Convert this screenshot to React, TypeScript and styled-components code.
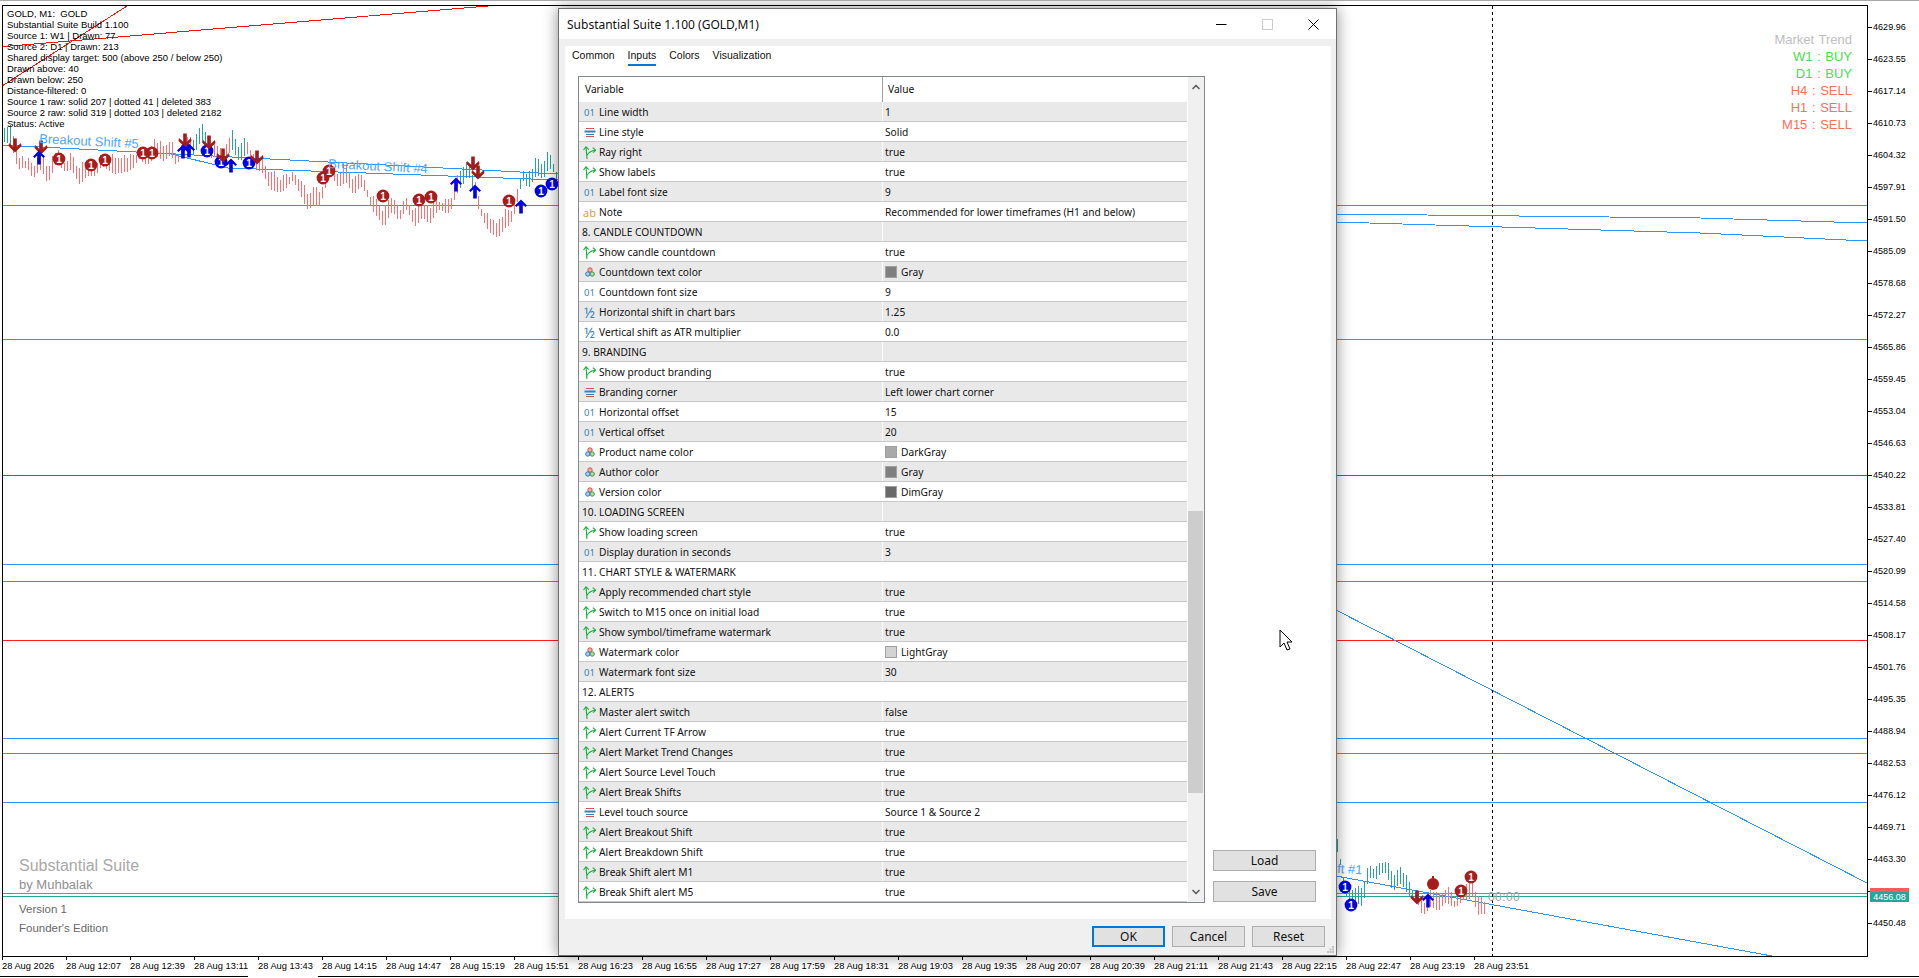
import React from "react";
import styled, { createGlobalStyle } from "styled-components";
import { ChevronUp, ChevronDown } from "lucide-react";

const GlobalStyle = createGlobalStyle`
  html, body {
    margin: 0;
    padding: 0;
    background: #ffffff;
    overflow: hidden;
  }
`;

const chartFont = `"Liberation Sans", Arial, sans-serif`;
const uiFont = `"Noto Sans", "Liberation Sans", sans-serif`;

const Page = styled.div`
  position: relative;
  width: 1919px;
  height: 978px;
  overflow: hidden;
  background: #fff;
  border-top: 1px solid #a8a8a8;
  box-sizing: border-box;
  padding-top: 4px;
  font-family: ${chartFont};
  color: #000;
`;

const ChartRow = styled.div`
  display: flex;
  height: 952px;
  padding-left: 2px;
`;

const ChartPane = styled.div`
  position: relative;
  width: 1866px;
  border: 1px solid #000;
  box-sizing: border-box;
  overflow: hidden;
`;

const ChartSvg = styled.svg`
  position: absolute;
  left: 0;
  top: 0;
  width: 1864px;
  height: 950px;
`;

const PriceAxis = styled.div`
  display: flex;
  flex-direction: column;
  padding-top: 6px;
`;

const PriceLabel = styled.div`
  position: relative;
  height: 32px;
  line-height: 32px;
  padding-left: 5px;
  font-size: 9px;
  letter-spacing: 0.05px;
  color: #000;

  &::before {
    content: "";
    position: absolute;
    left: 0;
    top: 16px;
    width: 4px;
    height: 1px;
    background: #000;
  }
`;

const PriceTag = styled.div<{ $bg: string }>`
  position: absolute;
  left: 1870px;
  width: 39px;
  height: 10px;
  line-height: 10px;
  background: ${(p) => p.$bg};
  color: #fff;
  font-size: 9px;
  text-align: center;
`;

const TimeAxis = styled.div`
  display: flex;
  height: 19px;
  padding-left: 2px;
`;

const TimeLabel = styled.div`
  position: relative;
  flex: 0 0 64px;
  padding-top: 4px;
  font-size: 9.3px;
  line-height: 11px;
  white-space: nowrap;

  &::before {
    content: "";
    position: absolute;
    left: 0;
    top: 0;
    width: 1px;
    height: 3px;
    background: #000;
  }
`;

const BottomRule = styled.div`
  display: flex;
  height: 1px;
`;

const RuleSegment = styled.div<{ $w: string; $on?: boolean }>`
  width: ${(p) => p.$w};
  background: ${(p) => (p.$on ? "#000" : "transparent")};
`;

const InfoBlock = styled.div`
  position: absolute;
  left: 4px;
  top: 2px;
  font-size: 9.5px;
  line-height: 11px;
  white-space: pre;
  color: #000;
`;

const TrendBlock = styled.div`
  position: absolute;
  right: 15px;
  top: 25px;
  text-align: right;
  font-size: 13px;
  line-height: 17px;
`;

const TrendLine = styled.div<{ $color: string }>`
  color: ${(p) => p.$color};
  word-spacing: 1px;
`;

const Branding = styled.div`
  position: absolute;
  left: 16px;
  bottom: 18px;
  display: flex;
  flex-direction: column;
`;

const BrandName = styled.div`
  font-size: 16px;
  line-height: 19px;
  color: #a9a9a9;
`;

const BrandAuthor = styled.div`
  font-size: 13px;
  line-height: 19px;
  color: #909090;
  margin-bottom: 6px;
`;

const BrandMeta = styled.div`
  font-size: 11.5px;
  line-height: 19px;
  color: #696969;
`;

const Dialog = styled.div`
  position: absolute;
  left: 558px;
  top: 7px;
  width: 779px;
  height: 948px;
  box-sizing: border-box;
  border: 1px solid #6f6f6f;
  background: #f0f0f0;
  box-shadow: 0 0 14px rgba(0, 0, 0, 0.45);
  display: flex;
  flex-direction: column;
  font-family: ${uiFont};
  color: #111;
`;

const TitleBar = styled.div`
  flex: 0 0 30px;
  display: flex;
  align-items: center;
  background: #fff;
  padding-left: 8px;
  font-size: 12px;
`;

const TitleText = styled.div`
  flex: 1;
`;

const WindowButton = styled.div`
  width: 46px;
  height: 30px;
  display: flex;
  align-items: center;
  justify-content: center;
`;

const Panel = styled.div`
  margin: 7px 5px 0 6px;
  height: 873px;
  background: #fff;
  padding-left: 13px;
  display: flex;
  flex-direction: column;
`;

const TabBar = styled.div`
  display: flex;
  gap: 13px;
  height: 20px;
  margin-left: -6px;
  font-family: ${chartFont};
  font-size: 10.5px;
`;

const Tab = styled.div<{ $active?: boolean }>`
  height: 20px;
  line-height: 18px;
  box-sizing: border-box;
  border-bottom: 2px solid ${(p) => (p.$active ? "#0078d7" : "transparent")};
`;

const Body = styled.div`
  display: flex;
  gap: 8px;
  margin-top: 10px;
  height: 827px;
`;

const Table = styled.div`
  width: 627px;
  box-sizing: border-box;
  border: 1px solid #828790;
  display: flex;
  background: #fff;
`;

const Grid = styled.div`
  flex: 1;
  display: flex;
  flex-direction: column;
  min-width: 0;
`;

const HeaderRow = styled.div`
  display: flex;
  height: 25px;
  font-size: 10.2px;
  line-height: 25px;
`;

const HeaderCell = styled.div<{ $value?: boolean }>`
  box-sizing: border-box;
  width: ${(p) => (p.$value ? "auto" : "303px")};
  flex: ${(p) => (p.$value ? 1 : "none")};
  padding-left: ${(p) => (p.$value ? "5px" : "6px")};
  border-left: ${(p) => (p.$value ? "1px solid #a0a0a0" : "none")};
`;

const Row = styled.div<{ $alt: boolean }>`
  display: flex;
  height: 20px;
  box-sizing: border-box;
  border-bottom: 1px solid #c8c8c8;
  background: ${(p) => (p.$alt ? "#e9e9e9" : "#fff")};
  font-size: 10.2px;
  line-height: 19px;
`;

const VariableCell = styled.div<{ $section: boolean }>`
  width: 303px;
  box-sizing: border-box;
  padding: 1px 0 0 ${(p) => (p.$section ? "3px" : "4px")};
  display: flex;
  align-items: center;
  gap: 3px;
  white-space: nowrap;
`;

const ValueCell = styled.div`
  flex: 1;
  box-sizing: border-box;
  border-left: 1px solid #fff;
  padding: 1px 0 0 2px;
  display: flex;
  align-items: center;
  gap: 4px;
  white-space: nowrap;
`;

const IconBox = styled.span<{ $color?: string; $size?: string }>`
  width: 13px;
  height: 13px;
  flex: none;
  display: flex;
  align-items: center;
  justify-content: center;
  font-size: ${(p) => p.$size ?? "9.5px"};
  line-height: 13px;
  color: ${(p) => p.$color ?? "#000"};
`;

const Swatch = styled.span<{ $color: string }>`
  width: 12px;
  height: 12px;
  flex: none;
  background: ${(p) => p.$color};
  border: 1px solid #a0a0a0;
  box-sizing: border-box;
`;

const Scrollbar = styled.div`
  flex: 0 0 16px;
  margin-left: 1px;
  background: #f0f0f0;
  display: flex;
  flex-direction: column;
`;

const ScrollArrow = styled.div`
  height: 20px;
  flex: none;
  display: flex;
  align-items: center;
  justify-content: center;
  color: #606060;
`;

const ScrollTrack = styled.div`
  flex: 1;
`;

const ScrollThumb = styled.div`
  margin-top: 414px;
  height: 282px;
  margin-right: 1px;
  background: #cdcdcd;
`;

const SideColumn = styled.div`
  width: 103px;
  display: flex;
  flex-direction: column;
  justify-content: flex-end;
  gap: 10px;
  padding-bottom: 1px;
`;

const Footer = styled.div`
  display: flex;
  justify-content: flex-end;
  gap: 7px;
  padding: 7px 11px 0 0;
`;

const Button = styled.div<{ $primary?: boolean; $w: string }>`
  width: ${(p) => p.$w};
  height: 21px;
  box-sizing: border-box;
  display: flex;
  align-items: center;
  justify-content: center;
  background: #e1e1e1;
  border: ${(p) => (p.$primary ? "2px solid #0078d7" : "1px solid #adadad")};
  font-size: 12px;
`;

const Grip = styled.svg`
  position: absolute;
  right: 1px;
  bottom: 1px;
`;

const Cursor = styled.svg`
  position: absolute;
  left: 1279px;
  top: 628px;
`;

const infoLines = [
  "GOLD, M1:  GOLD",
  "Substantial Suite Build 1.100",
  "Source 1: W1 | Drawn: 77",
  "Source 2: D1 | Drawn: 213",
  "Shared display target: 500 (above 250 / below 250)",
  "Drawn above: 40",
  "Drawn below: 250",
  "Distance-filtered: 0",
  "Source 1 raw: solid 207 | dotted 41 | deleted 383",
  "Source 2 raw: solid 319 | dotted 103 | deleted 2182",
  "Status: Active",
];

const trend = [
  { text: "Market Trend", color: "#c0c0c0" },
  { text: "W1 : BUY", color: "#4cdc4c" },
  { text: "D1 : BUY", color: "#4cdc4c" },
  { text: "H4 : SELL", color: "#ff6d5c" },
  { text: "H1 : SELL", color: "#ff6d5c" },
  { text: "M15 : SELL", color: "#ff6d5c" },
];

// the 4456.89 label sits under the current price tag in the terminal
const prices = [
  "4629.96", "4623.55", "4617.14", "4610.73", "4604.32", "4597.91", "4591.50", "4585.09",
  "4578.68", "4572.27", "4565.86", "4559.45", "4553.04", "4546.63", "4540.22", "4533.81",
  "4527.40", "4520.99", "4514.58", "4508.17", "4501.76", "4495.35", "4488.94", "4482.53",
  "4476.12", "4469.71", "4463.30", "", "4450.48",
];

const times = [
  "28 Aug 2026", "28 Aug 12:07", "28 Aug 12:39", "28 Aug 13:11", "28 Aug 13:43", "28 Aug 14:15",
  "28 Aug 14:47", "28 Aug 15:19", "28 Aug 15:51", "28 Aug 16:23", "28 Aug 16:55", "28 Aug 17:27",
  "28 Aug 17:59", "28 Aug 18:31", "28 Aug 19:03", "28 Aug 19:35", "28 Aug 20:07", "28 Aug 20:39",
  "28 Aug 21:11", "28 Aug 21:43", "28 Aug 22:15", "28 Aug 22:47", "28 Aug 23:19", "28 Aug 23:51",
];

type Kind = "int" | "enum" | "bool" | "text" | "color" | "frac" | "section";
type Setting = { kind: Kind; name: string; value?: string; swatch?: string };

const settings: Setting[] = [
  { kind: "int", name: "Line width", value: "1" },
  { kind: "enum", name: "Line style", value: "Solid" },
  { kind: "bool", name: "Ray right", value: "true" },
  { kind: "bool", name: "Show labels", value: "true" },
  { kind: "int", name: "Label font size", value: "9" },
  { kind: "text", name: "Note", value: "Recommended for lower timeframes (H1 and below)" },
  { kind: "section", name: "8. CANDLE COUNTDOWN" },
  { kind: "bool", name: "Show candle countdown", value: "true" },
  { kind: "color", name: "Countdown text color", value: "Gray", swatch: "#808080" },
  { kind: "int", name: "Countdown font size", value: "9" },
  { kind: "frac", name: "Horizontal shift in chart bars", value: "1.25" },
  { kind: "frac", name: "Vertical shift as ATR multiplier", value: "0.0" },
  { kind: "section", name: "9. BRANDING" },
  { kind: "bool", name: "Show product branding", value: "true" },
  { kind: "enum", name: "Branding corner", value: "Left lower chart corner" },
  { kind: "int", name: "Horizontal offset", value: "15" },
  { kind: "int", name: "Vertical offset", value: "20" },
  { kind: "color", name: "Product name color", value: "DarkGray", swatch: "#a9a9a9" },
  { kind: "color", name: "Author color", value: "Gray", swatch: "#808080" },
  { kind: "color", name: "Version color", value: "DimGray", swatch: "#696969" },
  { kind: "section", name: "10. LOADING SCREEN" },
  { kind: "bool", name: "Show loading screen", value: "true" },
  { kind: "int", name: "Display duration in seconds", value: "3" },
  { kind: "section", name: "11. CHART STYLE & WATERMARK" },
  { kind: "bool", name: "Apply recommended chart style", value: "true" },
  { kind: "bool", name: "Switch to M15 once on initial load", value: "true" },
  { kind: "bool", name: "Show symbol/timeframe watermark", value: "true" },
  { kind: "color", name: "Watermark color", value: "LightGray", swatch: "#d3d3d3" },
  { kind: "int", name: "Watermark font size", value: "30" },
  { kind: "section", name: "12. ALERTS" },
  { kind: "bool", name: "Master alert switch", value: "false" },
  { kind: "bool", name: "Alert Current TF Arrow", value: "true" },
  { kind: "bool", name: "Alert Market Trend Changes", value: "true" },
  { kind: "bool", name: "Alert Source Level Touch", value: "true" },
  { kind: "bool", name: "Alert Break Shifts", value: "true" },
  { kind: "enum", name: "Level touch source", value: "Source 1 & Source 2" },
  { kind: "bool", name: "Alert Breakout Shift", value: "true" },
  { kind: "bool", name: "Alert Breakdown Shift", value: "true" },
  { kind: "bool", name: "Break Shift alert M1", value: "true" },
  { kind: "bool", name: "Break Shift alert M5", value: "true" },
];

const SettingIcon = ({ kind }: { kind: Kind }) => {
  if (kind === "int") return <IconBox $color="#3d7fb8">01</IconBox>;
  if (kind === "text") return <IconBox $color="#d9a03f" $size="11px">ab</IconBox>;
  if (kind === "frac") return <IconBox $color="#3d7fb8" $size="14px">½</IconBox>;
  if (kind === "enum") {
    return (
      <IconBox>
        <svg width="12" height="11" viewBox="0 0 12 11">
          <path d="M2 1.5h8" stroke="#e05050" />
          <path d="M0.5 4.5h11" stroke="#2f80d0" strokeWidth="2" />
          <path d="M2 7.5h8" stroke="#2f80d0" />
          <path d="M2 9.5h8" stroke="#e05050" />
        </svg>
      </IconBox>
    );
  }
  if (kind === "bool") {
    return (
      <IconBox>
        <svg width="13" height="13" viewBox="0 0 13 13" fill="none" stroke="#17b03a" strokeWidth="1.1">
          <path d="M4 13L3 1" />
          <path d="M0.5 4L3 0.8L5.8 3.6" />
          <path d="M4 9.2C5.5 6.5 8 4.6 12.6 4.2" />
          <path d="M9.8 1.6L12.7 4.2L10 6.6" />
        </svg>
      </IconBox>
    );
  }
  if (kind === "color") {
    return (
      <IconBox>
        <svg width="10" height="10" viewBox="0 0 10 10" strokeWidth="0.9">
          <circle cx="5" cy="3" r="2.2" fill="#f4b0a8" stroke="#d04a3e" />
          <circle cx="2.8" cy="7" r="2.2" fill="#a8ccf0" stroke="#2f6fb8" />
          <circle cx="7.2" cy="7" r="2.2" fill="#b0dca8" stroke="#3c8c3c" />
        </svg>
      </IconBox>
    );
  }
  return null;
};

type Pt = [number, number];

const leftPath: Pt[] = [
  [4, 128], [14, 147], [25, 170], [36, 163], [46, 167], [57, 160], [79, 170], [89, 168], [107, 163],
  [121, 163], [143, 157], [161, 145], [175, 157], [193, 138], [205, 137], [214, 157], [232, 143],
  [246, 150], [264, 170], [279, 185], [293, 177], [307, 197], [318, 197], [329, 173], [350, 177],
  [368, 190], [375, 213], [393, 207], [414, 213], [436, 208], [450, 205], [459, 177], [468, 165],
  [479, 207], [489, 227], [507, 220], [518, 197], [523, 177], [536, 170], [546, 160], [557, 177],
];

const rightPath: Pt[] = [
  [1337, 850], [1343, 880], [1352, 897], [1362, 890], [1367, 877], [1378, 868], [1393, 875],
  [1407, 880], [1413, 898], [1420, 905], [1430, 900], [1443, 895], [1455, 903], [1463, 893],
  [1472, 885], [1478, 905], [1485, 907],
];

const leftTeal: Pt[] = [[3, 10], [193, 206], [232, 246], [459, 472], [520, 558]];

const yAt = (path: Pt[], x: number) => {
  for (let i = 1; i < path.length; i++) {
    if (x <= path[i][0]) {
      const [x0, y0] = path[i - 1];
      const [x1, y1] = path[i];
      return y0 + ((y1 - y0) * (x - x0)) / (x1 - x0);
    }
  }
  return path[path.length - 1][1];
};

const makeBars = (path: Pt[], isTeal: (x: number) => boolean) => {
  const out: { x: number; top: number; bottom: number; teal: boolean }[] = [];
  const start = path[0][0];
  const end = path[path.length - 1][0];
  for (let x = start; x <= end; x += 3) {
    const mid = yAt(path, x) + Math.sin(x * 1.7) * 3 + Math.sin(x * 0.43) * 2;
    const top = 3 + 7 * Math.abs(Math.sin(x * 0.83) * Math.cos(x * 0.31));
    const bottom = 3 + 8 * Math.abs(Math.sin(x * 1.13));
    out.push({ x, top: Math.round(mid - top), bottom: Math.round(mid + bottom), teal: isTeal(x) });
  }
  return out;
};

const bars = [
  ...makeBars(leftPath, (x) => leftTeal.some(([a, b]) => x >= a && x <= b)),
  ...makeBars(rightPath, (x) => x < 1413),
];

const redBadges: Pt[] = [
  [59, 159], [91, 165], [105, 160], [143, 153], [152, 153], [323, 178], [329, 171], [383, 196],
  [419, 200], [431, 197], [509, 201], [1461, 891], [1471, 877],
];
const blueBadges: Pt[] = [
  [207, 151], [221, 162], [249, 163], [541, 191], [552, 184], [1345, 887], [1351, 905],
];
const upArrows: Pt[] = [
  [39, 158], [183, 152], [189, 151], [231, 166], [456, 185], [475, 192], [521, 207], [1428, 901],
];
const downArrows: Pt[] = [
  [15, 145], [41, 147], [185, 140], [209, 142], [223, 155], [257, 157], [473, 163], [478, 172], [1417, 897],
];

const hLines: { y: number; color: string }[] = [
  { y: 205.5, color: "#2f96ff" },
  { y: 339.5, color: "#2f96ff" },
  { y: 475.5, color: "#ff2020" },
  { y: 564.5, color: "#2f96ff" },
  { y: 581.5, color: "#2f96ff" },
  { y: 640.5, color: "#ff2020" },
  { y: 738.5, color: "#2f96ff" },
  { y: 753.5, color: "#2f96ff" },
  { y: 802.5, color: "#2f96ff" },
  { y: 893.5, color: "#ff5a5a" },
  { y: 896.5, color: "#26a69a" },
];

const slanted: { points: string; color: string }[] = [
  { points: "2,46.7 488,6", color: "#ff1010" },
  { points: "2,86 127,6", color: "#ff1010" },
  { points: "2,145 558,174", color: "#2f96ff" },
  { points: "171,154 228,168 558,180", color: "#2f96ff" },
  { points: "1336,214 1700,218 1867,223", color: "#2f96ff" },
  { points: "1336,222 1700,233 1867,241", color: "#2f96ff" },
  { points: "1336,610 1867,883", color: "#2f96ff" },
  { points: "1336,876 1772,956", color: "#2f96ff" },
];

const Arrow = ({ x, y, up }: { x: number; y: number; up: boolean }) => (
  <path
    transform={`translate(${x} ${y}) scale(1 ${up ? 1 : -1})`}
    d={
      up
        ? "M0 -7.5L6 -1.5L4.5 0L1.8 -2.4V6.5H-1.8V-2.4L-4.5 0L-6 -1.5Z"
        : "M0 -7.5L6.5 -1L6 2L1.8 -1.8V6.5H-1.8V-1.8L-6 2L-6.5 -1Z"
    }
    fill={up ? "#0000e8" : "#a31a1a"}
  />
);

const Badge = ({ x, y, color }: { x: number; y: number; color: string }) => (
  <g>
    <circle cx={x} cy={y} r={6.4} fill={color} />
    <text x={x} y={y + 3.6} textAnchor="middle" fontSize="10" fontWeight="700" fontFamily={chartFont} fill="#fff">
      1
    </text>
  </g>
);

const ChartDrawing = () => (
  <ChartSvg viewBox="3 6 1864 950">
    {hLines.map((l) => (
      <line key={l.y} x1={0} x2={1868} y1={l.y} y2={l.y} stroke={l.color} strokeWidth="1" />
    ))}
    {slanted.map((s) => (
      <polyline key={s.points} points={s.points} fill="none" stroke={s.color} strokeWidth="1" shapeRendering="crispEdges" />
    ))}
    {bars.map((b) => (
      <line
        key={b.x}
        x1={b.x + 0.5}
        x2={b.x + 0.5}
        y1={b.top}
        y2={b.bottom}
        stroke={b.teal ? "#26a69a" : "#ff6f6f"}
        strokeWidth="1"
      />
    ))}
    <line x1={1492.5} x2={1492.5} y1={0} y2={956} stroke="#000" strokeDasharray="3 3" />
    {redBadges.map(([x, y]) => <Badge key={`${x}-${y}`} x={x} y={y} color="#a81c1c" />)}
    {blueBadges.map(([x, y]) => <Badge key={`${x}-${y}`} x={x} y={y} color="#0000e8" />)}
    {downArrows.map(([x, y]) => <Arrow key={`${x}-${y}`} x={x} y={y} up={false} />)}
    {upArrows.map(([x, y]) => <Arrow key={`${x}-${y}`} x={x} y={y} up />)}
    <circle cx={1433} cy={884} r={6} fill="#a81c1c" />
    <path d="M1433 876v4" stroke="#a81c1c" strokeWidth="2" />
    <text x={39} y={143} fontSize="13" fontFamily={chartFont} fill="#4da6ff" transform="rotate(3 39 143)">
      Breakout Shift #5
    </text>
    <text x={328} y={168} fontSize="13" fontFamily={chartFont} fill="#4da6ff" transform="rotate(3 328 168)">
      Breakout Shift #4
    </text>
    <text x={1337} y={873} fontSize="13" fontFamily={chartFont} fill="#4da6ff" transform="rotate(3 1337 873)">
      ft #1
    </text>
    <text x={1488} y={901} fontSize="12" letterSpacing="0.4" fontFamily={chartFont} fill="#a0a0a0">
      00:00
    </text>
  </ChartSvg>
);

export default function App() {
  return (
    <Page>
      <GlobalStyle />
      <ChartRow>
        <ChartPane>
          <ChartDrawing />
          <InfoBlock>{infoLines.join("\n")}</InfoBlock>
          <TrendBlock>
            {trend.map((t) => (
              <TrendLine key={t.text} $color={t.color}>{t.text}</TrendLine>
            ))}
          </TrendBlock>
          <Branding>
            <BrandName>Substantial Suite</BrandName>
            <BrandAuthor>by Muhbalak</BrandAuthor>
            <BrandMeta>Version 1</BrandMeta>
            <BrandMeta>Founder's Edition</BrandMeta>
          </Branding>
        </ChartPane>
        <PriceAxis>
          {prices.map((p, i) => (
            <PriceLabel key={i}>{p}</PriceLabel>
          ))}
        </PriceAxis>
      </ChartRow>
      <TimeAxis>
        {times.map((t) => (
          <TimeLabel key={t}>{t}</TimeLabel>
        ))}
      </TimeAxis>
      <BottomRule>
        <RuleSegment $w="248px" $on />
        <RuleSegment $w="70px" />
        <RuleSegment $w="1601px" $on />
      </BottomRule>

      <PriceTag $bg="#ff5a5a" style={{ top: 887 }} />
      <PriceTag $bg="#26a69a" style={{ top: 891 }}>4456.08</PriceTag>

      <Dialog>
        <TitleBar>
          <TitleText>Substantial Suite 1.100 (GOLD,M1)</TitleText>
          <WindowButton>
            <svg width="11" height="11" viewBox="0 0 11 11"><path d="M0 5.5h10.5" stroke="#000" /></svg>
          </WindowButton>
          <WindowButton>
            <svg width="11" height="11" viewBox="0 0 11 11"><rect x="0.5" y="0.5" width="10" height="10" fill="none" stroke="#cccccc" /></svg>
          </WindowButton>
          <WindowButton>
            <svg width="11" height="11" viewBox="0 0 11 11"><path d="M0.5 0.5l10 10M10.5 0.5l-10 10" stroke="#000" /></svg>
          </WindowButton>
        </TitleBar>
        <Panel>
          <TabBar>
            <Tab>Common</Tab>
            <Tab $active>Inputs</Tab>
            <Tab>Colors</Tab>
            <Tab>Visualization</Tab>
          </TabBar>
          <Body>
            <Table>
              <Grid>
                <HeaderRow>
                  <HeaderCell>Variable</HeaderCell>
                  <HeaderCell $value>Value</HeaderCell>
                </HeaderRow>
                {settings.map((s, i) => (
                  <Row key={s.name} $alt={i % 2 === 0}>
                    <VariableCell $section={s.kind === "section"}>
                      <SettingIcon kind={s.kind} />
                      {s.name}
                    </VariableCell>
                    <ValueCell>
                      {s.swatch && <Swatch $color={s.swatch} />}
                      {s.value}
                    </ValueCell>
                  </Row>
                ))}
              </Grid>
              <Scrollbar>
                <ScrollArrow><ChevronUp size={12} strokeWidth={3.5} /></ScrollArrow>
                <ScrollTrack><ScrollThumb /></ScrollTrack>
                <ScrollArrow><ChevronDown size={12} strokeWidth={3.5} /></ScrollArrow>
              </Scrollbar>
            </Table>
            <SideColumn>
              <Button $w="103px">Load</Button>
              <Button $w="103px">Save</Button>
            </SideColumn>
          </Body>
        </Panel>
        <Footer>
          <Button $primary $w="73px">OK</Button>
          <Button $w="73px">Cancel</Button>
          <Button $w="73px">Reset</Button>
        </Footer>
        <Grip width="8" height="8" viewBox="0 0 8 8" fill="#c4c4c4">
          <rect x="5" y="0" width="2" height="2" />
          <rect x="2.5" y="2.5" width="2" height="2" />
          <rect x="5" y="2.5" width="2" height="2" />
          <rect x="0" y="5" width="2" height="2" />
          <rect x="2.5" y="5" width="2" height="2" />
          <rect x="5" y="5" width="2" height="2" />
        </Grip>
      </Dialog>

      <Cursor width="14" height="22" viewBox="0 0 14 22">
        <path d="M1 1V18L5 14L8 21L11 20L8 13H13Z" fill="#fff" stroke="#000" strokeWidth="1" />
      </Cursor>
    </Page>
  );
}
